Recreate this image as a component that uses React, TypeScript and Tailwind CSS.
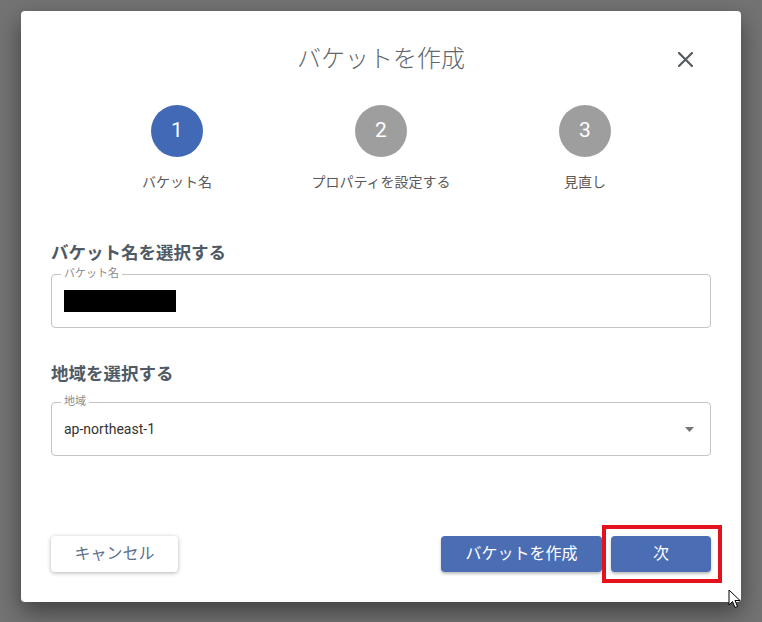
import React from 'react';

const font = { fontFamily: 'Roboto, "Noto Sans CJK JP", sans-serif' };

const steps = [
  { n: 1, label: 'バケット名', active: true },
  { n: 2, label: 'プロパティを設定する', active: false },
  { n: 3, label: '見直し', active: false },
];

function Field({ label, children }: { label: string; children: React.ReactNode }) {
  return (
    <div className="relative h-[54px] rounded-[4px] border border-[#c4c4c4] flex items-center px-[12px]">
      <span className="absolute -top-[8px] left-[9px] bg-white px-[3px] text-[11px] leading-[14px] text-[#8a8a8a]">
        {label}
      </span>
      {children}
    </div>
  );
}

export default function App() {
  return (
    <div className="relative h-[622px] w-[762px] overflow-hidden bg-[#737373] pt-[11px] pl-[21px]" style={font}>
      <div className="flex h-[591px] w-[720px] flex-col rounded-[4px] bg-white px-[30px] shadow-[0_10px_24px_rgba(0,0,0,0.45)]">
        <div className="grid grid-cols-[1fr_auto_1fr] items-center pt-[34px]">
          <div />
          <h1 className="text-[24px] leading-[28px] font-light text-[#62676c]">バケットを作成</h1>
          <div className="flex justify-end pr-[18px]">
            <svg width="15" height="15" viewBox="0 0 15 15" className="text-[#555b61]">
              <path d="M1 1 L14 14 M14 1 L1 14" stroke="currentColor" strokeWidth="2.2" strokeLinecap="round" />
            </svg>
          </div>
        </div>

        <div className="mt-[32px] flex justify-center">
          {steps.map((s) => (
            <div key={s.n} className="flex w-[204px] flex-col items-center">
              <div
                className={
                  s.active
                    ? 'flex h-[52px] w-[52px] items-center justify-center rounded-full bg-[#4169b6] text-[21px] text-white'
                    : 'flex h-[52px] w-[52px] items-center justify-center rounded-full bg-[#9e9e9e] text-[21px] text-white'
                }
              >
                {s.n}
              </div>
              <div className="mt-[15px] text-[14px] leading-[20px] text-[#5a5a5a]">{s.label}</div>
            </div>
          ))}
        </div>

        <h2 className="mt-[49px] text-[17.5px] leading-[24px] font-bold text-[#4f5a65]">バケット名を選択する</h2>
        <div className="mt-[9px]">
          <Field label="バケット名">
            <div className="h-[22px] w-[112px] bg-black" />
          </Field>
        </div>

        <h2 className="mt-[34px] text-[17.5px] leading-[24px] font-bold text-[#4f5a65]">地域を選択する</h2>
        <div className="mt-[16px]">
          <Field label="地域">
            <span className="flex-1 text-[14px] text-[#333]">ap-northeast-1</span>
            <svg width="9" height="5" viewBox="0 0 9 5" className="mr-[4px]">
              <path d="M0 0 L9 0 L4.5 5 Z" fill="#757575" />
            </svg>
          </Field>
        </div>

        <div className="flex-1" />

        <div className="mb-[30px] flex h-[36px] items-center">
          <button className="h-[36px] w-[127px] rounded-[4px] bg-white text-[16px] text-[#5b6f8e] shadow-[0_1px_4px_rgba(0,0,0,0.3)]">
            キャンセル
          </button>
          <div className="flex-1" />
          <button className="h-[36px] w-[161px] rounded-[4px] bg-[#4a6db4] text-[16px] text-white shadow-[0_2px_3px_rgba(0,0,0,0.25)]">
            バケットを作成
          </button>
          <div className="-mr-[11px] border-[4px] border-[#e4121c] py-[7px] pl-[5px] pr-[7px]">
            <button className="block h-[36px] w-[100px] rounded-[4px] bg-[#4a6db4] text-[16px] text-white shadow-[0_2px_3px_rgba(0,0,0,0.25)]">
              次
            </button>
          </div>
        </div>
      </div>

      <svg className="absolute left-[728px] top-[589px]" width="14" height="21" viewBox="0 0 14 21">
        <path d="M1 1 L1 16 L4.5 12.5 L7 18.5 L9.5 17.5 L7 11.5 L12 11.5 Z" fill="white" stroke="black" strokeWidth="1" strokeLinejoin="round" />
      </svg>
    </div>
  );
}
